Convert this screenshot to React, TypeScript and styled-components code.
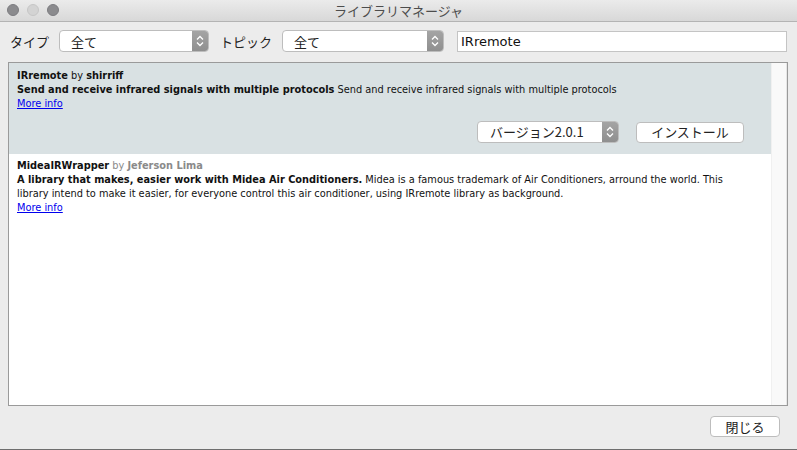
import React from "react";
import styled, { createGlobalStyle } from "styled-components";

const GlobalStyle = createGlobalStyle`
  html, body {
    margin: 0;
    padding: 0;
    background: #ececec;
  }
`;

const JP = `"Noto Sans CJK JP", "DejaVu Sans", sans-serif`;
const LIB = `"DejaVu Sans", Verdana, sans-serif`;

const Stepper: React.FC = () => (
  <StepperBox>
    <svg width="8" height="12" viewBox="0 0 8 12">
      <path d="M1 4.5 L4 1.5 L7 4.5" fill="none" stroke="#fff" strokeWidth="1.3" />
      <path d="M1 7.5 L4 10.5 L7 7.5" fill="none" stroke="#fff" strokeWidth="1.3" />
    </svg>
  </StepperBox>
);

const App: React.FC = () => {
  return (
    <Window>
      <GlobalStyle />
      <TitleBar>
        <Lights>
          <Light />
          <Light dim />
          <Light />
        </Lights>
        <Title>ライブラリマネージャ</Title>
      </TitleBar>

      <Toolbar>
        <Label>タイプ</Label>
        <Select width={150}>
          <SelectText>全て</SelectText>
          <Stepper />
        </Select>
        <Label>トピック</Label>
        <Select width={162}>
          <SelectText>全て</SelectText>
          <Stepper />
        </Select>
        <Search value="IRremote" readOnly />
      </Toolbar>

      <ListPanel>
        <List>
          <Item selected>
            <Line>
              <b>IRremote</b> by <b>shirriff</b>
            </Line>
            <Line>
              <b>Send and receive infrared signals with multiple protocols</b> Send and receive
              infrared signals with multiple protocols
            </Line>
            <Line>
              <MoreInfo href="#">More info</MoreInfo>
            </Line>
            <Actions>
              <Select width={142}>
                <VersionText>バージョン2.0.1</VersionText>
                <Stepper />
              </Select>
              <Button width={108}>インストール</Button>
            </Actions>
          </Item>
          <Item>
            <Line>
              <b>MideaIRWrapper</b> <Author>by <b>Jeferson Lima</b></Author>
            </Line>
            <Line>
              <b>A library that makes, easier work with Midea Air Conditioners.</b> Midea is a
              famous trademark of Air Conditioners, arround the world. This library intend to make
              it easier, for everyone control this air conditioner, using IRremote library as
              background.
            </Line>
            <Line>
              <MoreInfo href="#">More info</MoreInfo>
            </Line>
          </Item>
        </List>
        <ScrollTrack />
      </ListPanel>

      <Footer>
        <Button width={70}>閉じる</Button>
      </Footer>
    </Window>
  );
};

const Window = styled.div`
  height: 450px;
  box-sizing: border-box;
  display: flex;
  flex-direction: column;
  background: #ececec;
  border-bottom: 1px solid #6e6e6e;
`;

const TitleBar = styled.div`
  position: relative;
  height: 22px;
  box-sizing: border-box;
  display: flex;
  align-items: center;
  justify-content: center;
  background: linear-gradient(#ebebeb, #d8d8d8);
  border-bottom: 1px solid #b4b4b4;
`;

const Lights = styled.div`
  position: absolute;
  left: 7px;
  top: 4px;
  display: flex;
  gap: 8px;
`;

const Light = styled.span<{ dim?: boolean }>`
  width: 12px;
  height: 12px;
  border-radius: 50%;
  box-sizing: border-box;
  background: ${({ dim }) => (dim ? "#d3d3d3" : "#8b8b8e")};
  border: 1px solid ${({ dim }) => (dim ? "#c6c6c6" : "#7c7c80")};
`;

const Title = styled.div`
  font-family: ${JP};
  font-size: 13px;
  color: #4d4d4d;
  margin-top: -1px;
`;

const Toolbar = styled.div`
  display: flex;
  align-items: center;
  padding: 8px 10px 0 10px;
  height: 22px;
`;

const Label = styled.span`
  font-family: ${JP};
  font-size: 13px;
  color: #222;
  margin-right: 10px;
`;

const Select = styled.div<{ width: number }>`
  width: ${({ width }) => width}px;
  height: 22px;
  box-sizing: border-box;
  display: flex;
  align-items: center;
  background: #fff;
  border: 1px solid #bdbdbd;
  border-radius: 4px;
  margin-right: 11px;
  overflow: hidden;
`;

const SelectText = styled.span`
  flex: 1;
  padding-left: 11px;
  font-family: ${JP};
  font-size: 13px;
  color: #222;
`;

const VersionText = styled(SelectText)`
  padding-left: 12px;
`;

const StepperBox = styled.span`
  width: 16px;
  height: 100%;
  display: flex;
  align-items: center;
  justify-content: center;
  background: linear-gradient(#a4a4a4, #8f8f8f);
`;

const Search = styled.input`
  flex: 1;
  height: 21px;
  box-sizing: border-box;
  margin-left: 2px;
  border: 1px solid #c4c4c4;
  background: #fff;
  padding: 0 3px;
  font-family: ${LIB};
  font-size: 13px;
  color: #111;
  outline: none;
`;

const ListPanel = styled.div`
  flex: 1;
  display: flex;
  margin: 10px 9px 0 8px;
  border: 1px solid #9a9a9a;
  background: #fff;
  min-height: 0;
`;

const List = styled.div`
  flex: 1;
  display: flex;
  flex-direction: column;
`;

const ScrollTrack = styled.div`
  width: 14px;
  background: #f9f9f9;
  border-left: 1px solid #f0f0f0;
  border-right: 1px solid #e6e6e6;
`;

const Item = styled.div<{ selected?: boolean }>`
  padding: ${({ selected }) => (selected ? "6px 20px 11px 8px" : "5px 20px 4px 8px")};
  background: ${({ selected }) => (selected ? "#d9e1e3" : "#fff")};
  font-family: ${LIB};
  font-size: 9.8px;
  line-height: 14px;
  color: #111;
`;

const Line = styled.div``;

const Author = styled.span`
  color: #8a8a8a;
`;

const MoreInfo = styled.a`
  color: #0000ee;
  text-decoration: underline;
`;

const Actions = styled.div`
  display: flex;
  justify-content: flex-end;
  align-items: center;
  gap: 6px;
  margin-top: 10px;
  padding-right: 7px;
`;

const Button = styled.div<{ width: number }>`
  width: ${({ width }) => width}px;
  height: 21px;
  box-sizing: border-box;
  display: flex;
  align-items: center;
  justify-content: center;
  background: #fff;
  border: 1px solid #bdbdbd;
  border-radius: 4px;
  font-family: ${JP};
  font-size: 13px;
  color: #222;
`;

const Footer = styled.div`
  height: 43px;
  display: flex;
  justify-content: flex-end;
  align-items: flex-start;
  padding: 10px 17px 0 0;
  box-sizing: border-box;
`;

export default App;
